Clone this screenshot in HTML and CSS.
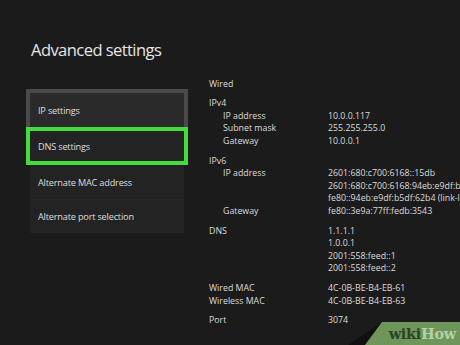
FILE: index.html
```html
<!DOCTYPE html>
<html>
<head>
<meta charset="utf-8">
<link rel="stylesheet" href="styles.css">
</head>
<body>
<div class="page">
  <h1 class="title">Advanced settings</h1>
  <div class="content">
    <nav class="menu">
      <div class="item item-raised">IP settings</div>
      <div class="item item-focus">DNS settings</div>
      <div class="item item-plain">Alternate MAC address</div>
      <div class="item item-plain">Alternate port selection</div>
    </nav>
    <section class="details">
      <div class="group">
        <div class="row"><span>Wired</span></div>
      </div>
      <div class="group">
        <div class="row"><span>IPv4</span></div>
        <div class="row sub"><span>IP address</span><span>10.0.0.117</span></div>
        <div class="row sub"><span>Subnet mask</span><span>255.255.255.0</span></div>
        <div class="row sub"><span>Gateway</span><span>10.0.0.1</span></div>
      </div>
      <div class="group">
        <div class="row"><span>IPv6</span></div>
        <div class="row sub"><span>IP address</span><span>2601:680:c700:6168::15db</span></div>
        <div class="row sub"><span></span><span>2601:680:c700:6168:94eb:e9df:b5df:62b4</span></div>
        <div class="row sub"><span></span><span>fe80::94eb:e9df:b5df:62b4 (link-local)</span></div>
        <div class="row sub"><span>Gateway</span><span>fe80::3e9a:77ff:fedb:3543</span></div>
      </div>
      <div class="group">
        <div class="row"><span>DNS</span><span>1.1.1.1</span></div>
        <div class="row"><span></span><span>1.0.0.1</span></div>
        <div class="row"><span></span><span>2001:558:feed::1</span></div>
        <div class="row"><span></span><span>2001:558:feed::2</span></div>
      </div>
      <div class="group">
        <div class="row"><span>Wired MAC</span><span>4C-0B-BE-B4-EB-61</span></div>
        <div class="row"><span>Wireless MAC</span><span>4C-0B-BE-B4-EB-63</span></div>
      </div>
      <div class="group">
        <div class="row"><span>Port</span><span>3074</span></div>
      </div>
    </section>
  </div>
</div>
<div class="wm-shadow"></div>
<div class="watermark"><span class="wm-wiki">wiki</span><span class="wm-how">How</span></div>
</body>
</html>
```

FILE: styles.css
```css
html, body {
  margin: 0;
  padding: 0;
}
body {
  width: 460px;
  height: 345px;
  overflow: hidden;
  background: #1b1b1b;
  font-family: "Open Sans", "Noto Sans", sans-serif;
  color: #d6d6d6;
  position: relative;
}
.page {
  padding: 39px 0 0 30px;
}
.title {
  margin: 0 0 0 1px;
  font-size: 16.5px;
  font-weight: 400;
  line-height: 22px;
  color: #e6e6e6;
  letter-spacing: -0.55px;
}
.content {
  display: flex;
  align-items: flex-start;
  margin-top: 16.5px;
  gap: 25px;
}
.menu {
  width: 154px;
  flex: none;
  margin-top: 11.5px;
  background: #232323;
  display: flex;
  flex-direction: column;
  font-size: 9.2px;
  letter-spacing: -0.2px;
  color: #dedede;
}
.item {
  display: flex;
  align-items: center;
  padding-left: 8px;
  white-space: nowrap;
}
.item-raised {
  height: 34px;
  margin: 0 -4px;
  border: 4px solid #4a4a4a;
  border-bottom: none;
  background: #2a2a2a;
}
.item-focus {
  height: 30px;
  margin: 0 -4px;
  border: 4px solid #42dc3b;
  background: #232323;
}
.item-plain {
  height: 34px;
}
.item-plain + .item-plain {
  border-top: 1px solid #292929;
  height: 33px;
}
.details {
  flex: 1;
  font-size: 8.8px;
  line-height: 12.5px;
  color: #dcdcdc;
  white-space: nowrap;
}
.group {
  margin-bottom: 7.4px;
}
.row {
  display: grid;
  grid-template-columns: 119px auto;
}
.row.sub > span:first-child {
  padding-left: 14px;
}
.wm-shadow {
  position: absolute;
  right: 78px;
  bottom: 0;
  width: 34px;
  height: 23px;
  background: #101010;
  clip-path: polygon(100% 0, 50% 100%, 0 100%);
}
.watermark {
  position: absolute;
  right: 0;
  bottom: 0;
  width: 95px;
  height: 23px;
  background: #6e955a;
  clip-path: polygon(17px 0, 100% 0, 100% 100%, 0 100%);
  font-family: "DejaVu Serif", "Liberation Serif", serif;
  font-weight: bold;
  font-size: 14.5px;
  line-height: 23px;
  letter-spacing: -0.3px;
  text-align: right;
  padding-right: 4px;
  box-sizing: border-box;
  white-space: nowrap;
}
.wm-wiki {
  color: #2c4424;
}
.wm-how {
  color: #b6d0a8;
}
```
